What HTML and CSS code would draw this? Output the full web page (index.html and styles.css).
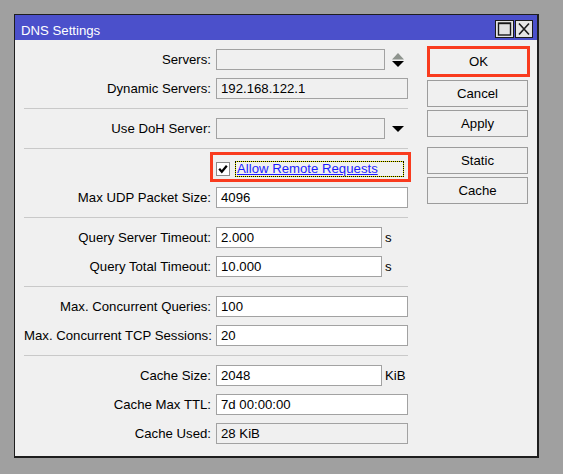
FILE: index.html
```html
<!DOCTYPE html>
<html>
<head>
<meta charset="utf-8">
<link rel="stylesheet" href="styles.css">
</head>
<body>
<div class="win">
  <div class="titlebar">
    <span class="title">DNS Settings</span>
    <div class="tbtns">
      <span class="tb tb-max"><svg width="19" height="18" viewBox="0 0 19 18"><rect x="0.5" y="0.5" width="18" height="17" fill="#e4e4e4" stroke="#1a1a1a"/><rect x="3.5" y="3" width="12" height="12" fill="none" stroke="#1a1a1a" stroke-width="1.4"/><line x1="3.5" y1="3.6" x2="15.5" y2="3.6" stroke="#1a1a1a" stroke-width="1.2"/></svg></span>
      <span class="tb tb-close"><svg width="18" height="18" viewBox="0 0 18 18"><rect x="0.5" y="0.5" width="17" height="17" fill="#e4e4e4" stroke="#1a1a1a"/><path d="M4 3.5 L14 14.5 M14 3.5 L4 14.5" stroke="#1a1a1a" stroke-width="1.6"/></svg></span>
    </div>
  </div>
  <div class="content">
    <div class="form">
      <div class="sec">
        <div class="row">
          <span class="lbl">Servers:</span>
          <div class="field">
            <div class="inp ro"></div>
            <span class="suf icon"><svg width="12" height="16" viewBox="0 0 12 16"><path d="M6 1 L12 7.5 L0 7.5 Z" fill="#8e948e"/><path d="M0 9 L12 9 L6 15 Z" fill="#000"/></svg></span>
          </div>
        </div>
        <div class="row">
          <span class="lbl">Dynamic Servers:</span>
          <div class="field"><div class="inp ro">192.168.122.1</div></div>
        </div>
      </div>
      <div class="sep"></div>
      <div class="sec">
        <div class="row">
          <span class="lbl">Use DoH Server:</span>
          <div class="field">
            <div class="inp ro"></div>
            <span class="suf icon"><svg width="12" height="6" viewBox="0 0 12 6"><path d="M0 0 L12 0 L6 6 Z" fill="#000"/></svg></span>
          </div>
        </div>
      </div>
      <div class="sep"></div>
      <div class="sec">
        <div class="row">
          <span class="lbl"></span>
          <div class="field chkfield">
            <span class="chk"><svg width="14" height="14" viewBox="0 0 14 14"><rect x="0.5" y="0.5" width="13" height="13" fill="#fff" stroke="#8a8a8a"/><path d="M3.2 6.8 L5.8 9.8 L10.8 3.8" fill="none" stroke="#000" stroke-width="2.2"/></svg></span>
            <span class="chklbl">Allow Remote Requests</span>
          </div>
        </div>
        <div class="row">
          <span class="lbl">Max UDP Packet Size:</span>
          <div class="field"><div class="inp">4096</div></div>
        </div>
      </div>
      <div class="sep"></div>
      <div class="sec">
        <div class="row">
          <span class="lbl">Query Server Timeout:</span>
          <div class="field"><div class="inp">2.000</div><span class="suf unit">s</span></div>
        </div>
        <div class="row">
          <span class="lbl">Query Total Timeout:</span>
          <div class="field"><div class="inp">10.000</div><span class="suf unit">s</span></div>
        </div>
      </div>
      <div class="sep"></div>
      <div class="sec">
        <div class="row">
          <span class="lbl">Max. Concurrent Queries:</span>
          <div class="field"><div class="inp">100</div></div>
        </div>
        <div class="row">
          <span class="lbl">Max. Concurrent TCP Sessions:</span>
          <div class="field"><div class="inp">20</div></div>
        </div>
      </div>
      <div class="sep"></div>
      <div class="sec">
        <div class="row">
          <span class="lbl">Cache Size:</span>
          <div class="field"><div class="inp">2048</div><span class="suf unit">KiB</span></div>
        </div>
        <div class="row">
          <span class="lbl">Cache Max TTL:</span>
          <div class="field"><div class="inp">7d 00:00:00</div></div>
        </div>
        <div class="row">
          <span class="lbl">Cache Used:</span>
          <div class="field"><div class="inp ro">28 KiB</div></div>
        </div>
      </div>
    </div>
    <div class="btns">
      <div class="btn ok">OK</div>
      <div class="btn">Cancel</div>
      <div class="btn">Apply</div>
      <div class="btn gap">Static</div>
      <div class="btn">Cache</div>
    </div>
  </div>
</div>
</body>
</html>
```

FILE: styles.css
```css
html, body {
  margin: 0;
  padding: 0;
}
body {
  background: #a0a0a0;
  width: 563px;
  height: 474px;
  padding: 14px 0 0 14px;
  box-sizing: border-box;
  font-family: "Liberation Sans", Arial, sans-serif;
  font-size: 13.2px;
  color: #000;
}
.win {
  width: 525px;
  border-top: 1px solid #1e1e1e;
  border-left: 1px solid #1e1e1e;
  border-right: 2px solid #1e1e1e;
  border-bottom: 2px solid #1e1e1e;
  box-sizing: border-box;
  background: #f0f0f0;
}
.titlebar {
  height: 25px;
  background: #4b50cb;
  display: flex;
  justify-content: space-between;
  align-items: flex-start;
}
.title {
  color: #fff;
  padding: 8px 0 0 6px;
  line-height: 15px;
}
.tbtns {
  display: flex;
  gap: 1px;
  padding: 5px 4px 0 0;
}
.tb svg {
  display: block;
}
.content {
  display: flex;
  height: 416px;
  box-sizing: border-box;
  padding: 9px 0 0 9px;
}
.form {
  width: 384px;
  display: flex;
  flex-direction: column;
}
.sec {
  display: flex;
  flex-direction: column;
  gap: 8px;
}
.sep {
  height: 1px;
  background: #c9c9c9;
  margin: 9px 0;
}
.row {
  display: grid;
  grid-template-columns: 187px 192px;
  column-gap: 5px;
  height: 21px;
  align-items: center;
}
.lbl {
  text-align: right;
  white-space: nowrap;
  line-height: 21px;
}
.field {
  display: flex;
  height: 21px;
  align-items: center;
}
.inp {
  flex: 1;
  height: 21px;
  box-sizing: border-box;
  border: 1px solid #a2a2a2;
  background: #fff;
  padding: 0 4px;
  line-height: 19px;
  white-space: nowrap;
}
.inp.ro {
  background: #f0f0f0;
}
.suf.icon {
  width: 23px;
  display: flex;
  justify-content: flex-end;
  padding-right: 4px;
  box-sizing: border-box;
}
.suf.icon svg {
  display: block;
}
.suf.unit {
  width: 26px;
  padding-left: 3px;
  box-sizing: border-box;
  line-height: 21px;
}
.chkfield {
  height: 24px;
  margin-top: -3px;
  margin-left: -3px;
  padding-left: 3px;
  width: 195px;
  box-sizing: border-box;
  align-items: flex-start;
  outline: 3px solid #f93b1e;
}
.chk {
  margin-top: 7px;
}
.chk svg {
  display: block;
}
.chklbl {
  margin-top: 6px;
  margin-left: 5px;
  width: 169px;
  height: 16px;
  box-sizing: border-box;
  border: 1px dotted #000;
  background: linear-gradient(#f0f0f0, #f0f0f0) padding-box, #e8e800 border-box;
  color: #1c1cff;
  text-decoration: underline;
  line-height: 14px;
  padding-left: 1px;
  white-space: nowrap;
}
.btns {
  margin-left: 19px;
  margin-top: -3px;
  display: flex;
  flex-direction: column;
  gap: 3px;
}
.btn {
  width: 101px;
  height: 27px;
  box-sizing: border-box;
  border: 1px solid #9c9c9c;
  background: #f0f0f0;
  text-align: center;
  line-height: 25px;
}
.btn.ok {
  width: 103px;
  height: 31px;
  border: 3px solid #f93b1e;
  line-height: 25px;
}
.btn.gap {
  margin-top: 7px;
}
```
